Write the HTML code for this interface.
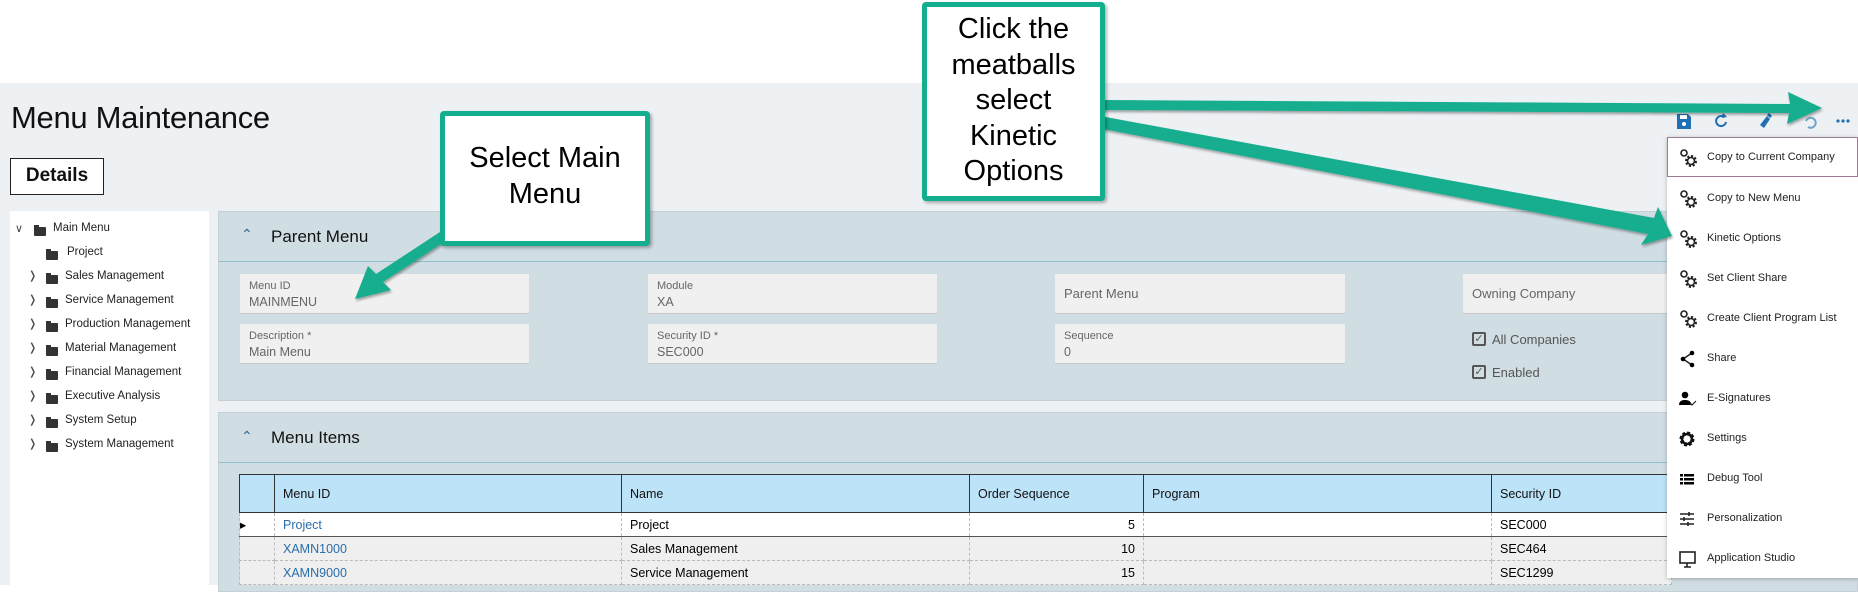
<!DOCTYPE html>
<html><head><meta charset="utf-8"><style>
*{margin:0;padding:0;box-sizing:border-box}
body{width:1858px;height:585px;overflow:hidden;background:#fff;font-family:"Liberation Sans",sans-serif;position:relative}
.a{position:absolute}
.bg{left:0;top:83px;width:1858px;height:502px;background:#edf1f4}
.title{left:11px;top:100px;font-size:31px;color:#111;letter-spacing:-0.3px}
.det{left:10px;top:158px;width:94px;height:37px;border:1.5px solid #222;background:#fff;font-size:19px;font-weight:bold;text-align:center;line-height:34px;color:#111}
.tree{left:10px;top:211px;width:199px;height:374px;background:#fff}
.ti{position:absolute;font-size:11.5px;color:#222;white-space:nowrap}
.fold{position:absolute;width:12px;height:9px;background:#333;border-radius:1px}
.fold:before{content:"";position:absolute;left:0;top:-2px;width:5px;height:3px;background:#333}
.chev{position:absolute;font-size:11px;color:#444}
.panel{background:#d0dde2;border:1px solid #c4d0d5}
.ph{position:absolute;left:0;right:0;top:0;height:50px;border-bottom:1.5px solid #8fbfce}
.pt{position:absolute;left:52px;font-size:17px;color:#111}
.car{position:absolute;left:22px;color:#2a6a90;font-size:14px}
.fld{position:absolute;background:#f0f0f0;border-bottom:1px solid #c8c8c8;height:40px}
.fl{position:absolute;left:9px;top:6px;font-size:11px;color:#666}
.fv{position:absolute;left:9px;top:21px;font-size:12.5px;color:#666}
.fp{position:absolute;left:9px;top:12px;font-size:13px;color:#666}
.cb{position:absolute;width:14px;height:14px;border:2px solid #555;border-radius:2px;font-size:11px;line-height:10px;text-align:center;color:#555}
.cbl{position:absolute;font-size:13px;color:#555}
table{border-collapse:collapse;position:absolute;left:239px;top:474px;font-size:12.5px}
td{height:24px;padding:0 8px;border:1px dashed #bbb;white-space:nowrap}
tr.h td{height:38px;background:#bde3f8;border:1.5px solid #333;color:#111}
tr.r1 td{background:#fff;border-bottom:1.5px solid #555;border-top:1.5px solid #333}
tr.r td{background:#efefef}
.lnk{color:#2a6ea8}
.num{text-align:right}
.menu{left:1667px;top:137px;width:191px;height:441px;background:#fff;box-shadow:0 1px 4px rgba(0,0,0,.25)}
.mi{position:absolute;left:40px;font-size:11px;color:#222;white-space:nowrap}
.ic{position:absolute;left:12px}
.call{position:absolute;background:#fff;border:5px solid #12ae8e;border-radius:4px;text-align:center;font-size:29px;color:#000;box-shadow:2px 2px 3px rgba(0,0,0,.3)}
</style></head><body>
<div class="a bg"></div>
<div class="a title">Menu Maintenance</div>
<div class="a det">Details</div>

<div class="a tree">
 <div class="chev" style="left:5px;top:11px">&#8744;</div>
 <div class="fold" style="left:24px;top:16px"></div><div class="ti" style="left:43px;top:11px">Main Menu</div>
 <div class="fold" style="left:36px;top:40px"></div><div class="ti" style="left:57px;top:35px">Project</div>
 <div class="chev" style="left:18px;top:58px">&#x276D;</div><div class="fold" style="left:36px;top:64px"></div><div class="ti" style="left:55px;top:59px">Sales Management</div>
 <div class="chev" style="left:18px;top:82px">&#x276D;</div><div class="fold" style="left:36px;top:88px"></div><div class="ti" style="left:55px;top:83px">Service Management</div>
 <div class="chev" style="left:18px;top:106px">&#x276D;</div><div class="fold" style="left:36px;top:112px"></div><div class="ti" style="left:55px;top:107px">Production Management</div>
 <div class="chev" style="left:18px;top:130px">&#x276D;</div><div class="fold" style="left:36px;top:136px"></div><div class="ti" style="left:55px;top:131px">Material Management</div>
 <div class="chev" style="left:18px;top:154px">&#x276D;</div><div class="fold" style="left:36px;top:160px"></div><div class="ti" style="left:55px;top:155px">Financial Management</div>
 <div class="chev" style="left:18px;top:178px">&#x276D;</div><div class="fold" style="left:36px;top:184px"></div><div class="ti" style="left:55px;top:179px">Executive Analysis</div>
 <div class="chev" style="left:18px;top:202px">&#x276D;</div><div class="fold" style="left:36px;top:208px"></div><div class="ti" style="left:55px;top:203px">System Setup</div>
 <div class="chev" style="left:18px;top:226px">&#x276D;</div><div class="fold" style="left:36px;top:232px"></div><div class="ti" style="left:55px;top:227px">System Management</div>
</div>

<div class="a panel" style="left:218px;top:211px;width:1640px;height:190px">
 <div class="ph"><div class="car" style="top:14px">&#8963;</div><div class="pt" style="top:15px">Parent Menu</div></div>
 <div class="fld" style="left:21px;top:62px;width:289px"><div class="fl">Menu ID</div><div class="fv">MAINMENU</div></div>
 <div class="fld" style="left:21px;top:112px;width:289px"><div class="fl">Description *</div><div class="fv">Main Menu</div></div>
 <div class="fld" style="left:429px;top:62px;width:289px"><div class="fl">Module</div><div class="fv">XA</div></div>
 <div class="fld" style="left:429px;top:112px;width:289px"><div class="fl">Security ID *</div><div class="fv">SEC000</div></div>
 <div class="fld" style="left:836px;top:62px;width:290px"><div class="fp">Parent Menu</div></div>
 <div class="fld" style="left:836px;top:112px;width:290px"><div class="fl">Sequence</div><div class="fv">0</div></div>
 <div class="fld" style="left:1244px;top:62px;width:300px"><div class="fp">Owning Company</div></div>
 <div class="cb" style="left:1253px;top:120px">&#10003;</div><div class="cbl" style="left:1273px;top:120px">All Companies</div>
 <div class="cb" style="left:1253px;top:153px">&#10003;</div><div class="cbl" style="left:1273px;top:153px">Enabled</div>
</div>

<div class="a panel" style="left:218px;top:412px;width:1640px;height:180px">
 <div class="ph"><div class="car" style="top:15px">&#8963;</div><div class="pt" style="top:15px">Menu Items</div></div>
</div>
<table>
<tr class="h"><td style="width:35px"></td><td style="width:347px">Menu ID</td><td style="width:348px">Name</td><td style="width:174px">Order Sequence</td><td style="width:348px">Program</td><td style="width:180px">Security ID</td></tr>
<tr class="r1"><td style="padding:0">&#9656;</td><td class="lnk">Project</td><td>Project</td><td class="num">5</td><td></td><td>SEC000</td></tr>
<tr class="r"><td></td><td class="lnk">XAMN1000</td><td>Sales Management</td><td class="num">10</td><td></td><td>SEC464</td></tr>
<tr class="r"><td></td><td class="lnk">XAMN9000</td><td>Service Management</td><td class="num">15</td><td></td><td>SEC1299</td></tr>
</table>

<svg class="a" style="left:1670px;top:108px" width="188" height="26" viewBox="0 0 188 26">
 <g fill="#1f6fb2">
 <path d="M7 6h11l3 3v12H7z"/><rect x="10" y="7" width="7" height="4" fill="#fff"/><circle cx="14" cy="16" r="2" fill="#fff"/>
 <path d="M54 9a5 5 0 1 0 2 5" fill="none" stroke="#1f6fb2" stroke-width="2"/><path d="M53 5l4 4-5 1z"/>
 <path d="M97 8l3 3-6 9-4-3z"/><path d="M99 5l3 3-2 2-3-3z"/>
 <path d="M136 13a5 5 0 1 1 2 6" fill="none" stroke="#1f6fb2" stroke-width="2" opacity=".6"/>
 <circle cx="168" cy="13" r="1.6"/><circle cx="173" cy="13" r="1.6"/><circle cx="178" cy="13" r="1.6"/>
 </g>
</svg>

<div class="a menu">
 <div class="a" style="left:0;top:0;width:191px;height:40px;border:1.5px solid #a07a95"></div>
 <svg width="0" height="0"><defs><g id="g2"><circle cx="5" cy="4" r="3" fill="none" stroke="#222" stroke-width="1.6"/><circle cx="12" cy="12" r="4.5" fill="none" stroke="#222" stroke-width="3" stroke-dasharray="2 1.5"/><circle cx="12" cy="12" r="3.5" fill="none" stroke="#222" stroke-width="1.6"/></g></defs></svg>
 <svg class="ic" style="top:12px" width="18" height="18"><use href="#g2"/></svg><div class="mi" style="top:14px">Copy to Current Company</div>
 <svg class="ic" style="top:53px" width="18" height="18"><use href="#g2"/></svg><div class="mi" style="top:55px">Copy to New Menu</div>
 <svg class="ic" style="top:93px" width="18" height="18"><use href="#g2"/></svg><div class="mi" style="top:95px">Kinetic Options</div>
 <svg class="ic" style="top:133px" width="18" height="18"><use href="#g2"/></svg><div class="mi" style="top:135px">Set Client Share</div>
 <svg class="ic" style="top:173px" width="18" height="18"><use href="#g2"/></svg><div class="mi" style="top:175px">Create Client Program List</div>
 <svg class="ic" style="top:213px" width="18" height="18"><path d="M13 3L4 9l9 6" fill="none" stroke="#222" stroke-width="1.5"/><circle cx="13" cy="3" r="2.3"/><circle cx="4" cy="9" r="2.3"/><circle cx="13" cy="15" r="2.3"/></svg><div class="mi" style="top:215px">Share</div>
 <svg class="ic" style="top:253px" width="18" height="18"><circle cx="6" cy="5" r="3.3"/><path d="M0 15c0-4 3-5 6-5s5 1 6 3v2z"/><path d="M11 13l2 2 4-4" fill="none" stroke="#222" stroke-width="1.2"/></svg><div class="mi" style="top:255px">E-Signatures</div>
 <svg class="ic" style="top:293px" width="18" height="18"><circle cx="8" cy="9" r="5.5" fill="none" stroke="#111" stroke-width="4" stroke-dasharray="2.6 1.7"/><circle cx="8" cy="9" r="5" fill="none" stroke="#111" stroke-width="2.5"/></svg><div class="mi" style="top:295px">Settings</div>
 <svg class="ic" style="top:333px" width="18" height="18"><rect x="1" y="4" width="3" height="2.5"/><rect x="5" y="4" width="10" height="2.5"/><rect x="1" y="8" width="3" height="2.5"/><rect x="5" y="8" width="10" height="2.5"/><rect x="1" y="12" width="3" height="2.5"/><rect x="5" y="12" width="10" height="2.5"/></svg><div class="mi" style="top:335px">Debug Tool</div>
 <svg class="ic" style="top:373px" width="18" height="18"><path d="M1 4h14M1 9h14M1 14h14" stroke="#222" stroke-width="1.4"/><path d="M10 2v4M5 7v4M9 12v4" stroke="#222" stroke-width="1.6"/></svg><div class="mi" style="top:375px">Personalization</div>
 <svg class="ic" style="top:413px" width="18" height="20"><rect x="1" y="2" width="15" height="11" fill="none" stroke="#222" stroke-width="1.6"/><path d="M8 13v4M5 17h7" stroke="#222" stroke-width="1.6"/></svg><div class="mi" style="top:415px">Application Studio</div>
</div>

<svg class="a" style="left:0;top:0" width="1858" height="585">
 <defs><filter id="sh"><feDropShadow dx="1" dy="2" stdDeviation="1.2" flood-opacity=".35"/></filter></defs>
 <g fill="#12ae8e" filter="url(#sh)">
  <path d="M1100 100L1790 104L1788 92L1822 108L1787 124L1789 113L1100 110z"/>
  <path d="M1100 116L1654 218L1658 207L1672 236L1641 245L1648 234L1098 128z"/>
  <path d="M450 238L383 282L391 290L355 299L368 266L376 274L440 232z"/>
 </g>
</svg>

<div class="call" style="left:440px;top:111px;width:210px;height:135px;padding-top:24px;line-height:36px">Select Main<br>Menu</div>
<div class="call" style="left:922px;top:2px;width:183px;height:199px;padding-top:5px;line-height:35.5px">Click the<br>meatballs<br>select<br>Kinetic<br>Options</div>
</body></html>
